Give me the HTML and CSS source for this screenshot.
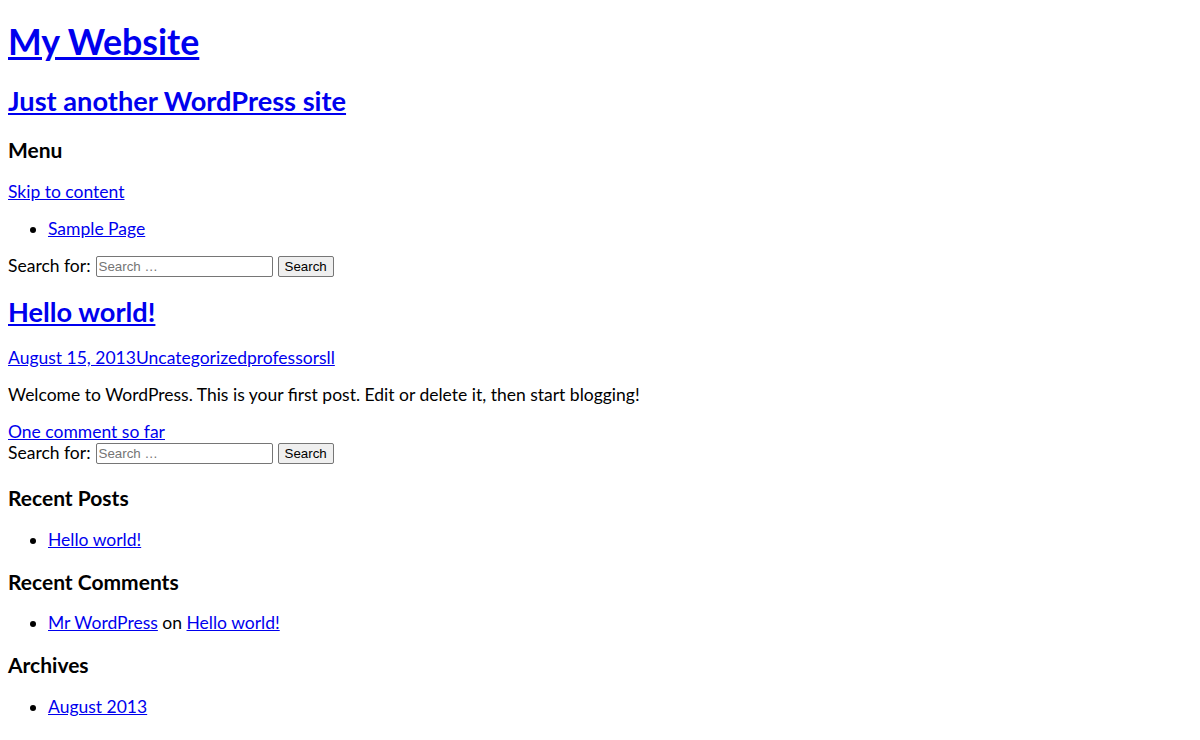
FILE: index.html
```html
<!DOCTYPE html>
<html lang="en">
<head>
<meta charset="utf-8">
<title>My Website | Just another WordPress site</title>
<link rel="stylesheet" href="styles.css">
</head>
<body>
<header class="site-header">
  <h1 class="site-title"><a href="#">My Website</a></h1>
  <h2 class="site-description"><a href="#">Just another WordPress site</a></h2>
  <nav class="site-nav">
    <h3 class="menu-title">Menu</h3>
    <p class="skip"><a href="#content">Skip to content</a></p>
    <ul class="menu">
      <li><a href="#">Sample Page</a></li>
    </ul>
    <form class="search-form">
      <label class="search-label">Search for:</label>
      <input class="search-field" type="search" placeholder="Search …">
      <button class="search-submit" type="button">Search</button>
    </form>
  </nav>
</header>
<main id="content" class="site-main">
  <article class="post">
    <h2 class="entry-title"><a href="#">Hello world!</a></h2>
    <p class="entry-meta"><a href="#">August 15, 2013</a><a href="#">Uncategorized</a><a href="#">professorsll</a></p>
    <p class="entry-content">Welcome to WordPress. This is your first post. Edit or delete it, then start blogging!</p>
    <div class="entry-footer"><a href="#">One comment so far</a></div>
  </article>
</main>
<aside class="sidebar">
  <form class="search-form">
    <label class="search-label">Search for:</label>
    <input class="search-field" type="search" placeholder="Search …">
    <button class="search-submit" type="button">Search</button>
  </form>
  <section class="widget">
    <h3 class="widget-title">Recent Posts</h3>
    <ul class="widget-list">
      <li><a href="#">Hello world!</a></li>
    </ul>
  </section>
  <section class="widget">
    <h3 class="widget-title">Recent Comments</h3>
    <ul class="widget-list">
      <li><a href="#">Mr WordPress</a> on <a href="#">Hello world!</a></li>
    </ul>
  </section>
  <section class="widget">
    <h3 class="widget-title">Archives</h3>
    <ul class="widget-list">
      <li><a href="#">August 2013</a></li>
    </ul>
  </section>
  <section class="widget">
    <h3 class="widget-title">Categories</h3>
    <ul class="widget-list">
      <li><a href="#">Uncategorized</a></li>
    </ul>
  </section>
</aside>
</body>
</html>
```

FILE: styles.css
```css
html {
  background: #ffffff;
}

body {
  margin: 0;
  padding: 0 8px;
  font-family: "Lato", "Open Sans", sans-serif;
  font-size: 17.5px;
  line-height: 21.3px;
  color: #000000;
}

a {
  color: #0000ee;
  text-decoration: underline;
}

.site-title {
  font-size: 35.7px;
  line-height: 42.6px;
  font-weight: 700;
  margin: 21.4px 0;
}

.site-description,
.entry-title {
  font-size: 27.2px;
  line-height: 32px;
  font-weight: 700;
  margin: 19.9px 0;
}

.entry-title {
  margin-bottom: 18.2px;
}

.menu-title,
.widget-title {
  font-size: 21px;
  line-height: 25px;
  font-weight: 700;
  margin: 18.7px 0;
}

p {
  margin: 16px 0;
}

.entry-meta {
  margin-bottom: 15px;
}

ul {
  margin: 16px 0;
  padding-left: 40px;
}

.search-form {
  display: flex;
  align-items: center;
  gap: 5px;
  height: 21px;
  margin: 0;
}

.search-field {
  box-sizing: border-box;
  width: 177px;
  height: 21px;
  margin: 0;
  padding: 1px 2px;
  border: 1px solid #767676;
  border-radius: 2px;
  font-family: "Liberation Sans", Arial, sans-serif;
  font-size: 13.33px;
  background: #ffffff;
}

.search-field::placeholder {
  color: #757575;
}

.search-submit {
  box-sizing: border-box;
  height: 21px;
  margin: 0;
  padding: 1px 6px;
  border: 1px solid #767676;
  border-radius: 2px;
  background: #efefef;
  color: #000000;
  font-family: "Liberation Sans", Arial, sans-serif;
  font-size: 13.33px;
}

.sidebar .search-form + .widget .widget-title {
  margin-top: 21.5px;
}
```
